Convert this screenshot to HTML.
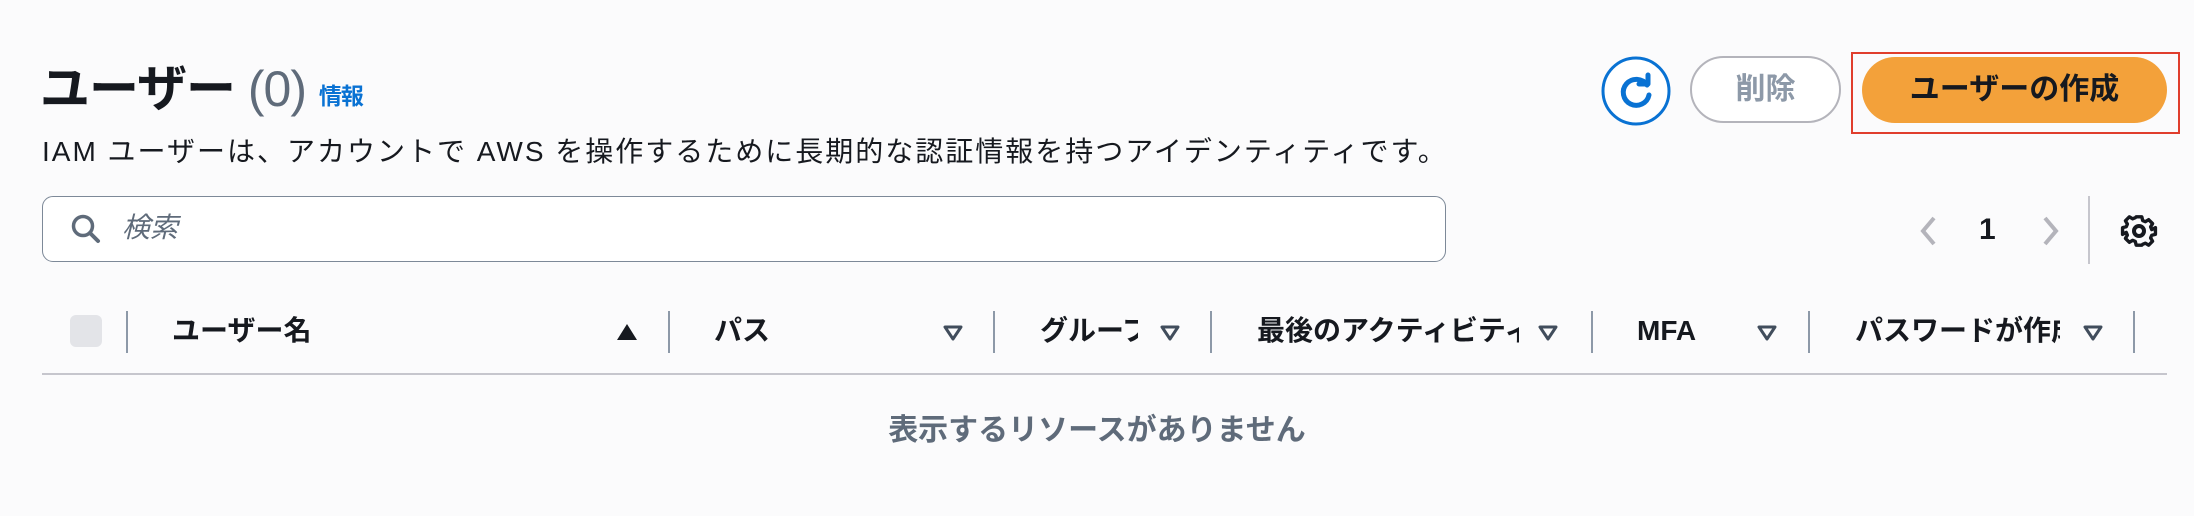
<!DOCTYPE html>
<html><head><meta charset="utf-8"><style>
body{margin:0;width:2194px;height:516px;background:#fbfbfc;font-family:"Liberation Sans","Noto Sans CJK JP",sans-serif;position:relative;overflow:hidden;color:#16191f}
.a{position:absolute;white-space:nowrap}
.h{font-weight:bold;font-size:28px;color:#16191f;top:313px;line-height:36px}
.dv{position:absolute;top:311px;height:42px;width:2px;background:#8d99a8}
.dn{position:absolute;top:324px}
</style></head><body>
<div class="a" style="left:40px;top:57px;font-size:50px;line-height:64px;font-weight:bold;letter-spacing:-1px">ユーザー <span style="color:#5f6b7a;font-weight:normal">(0)</span> <span style="font-size:23px;color:#0972d3;font-weight:bold;vertical-align:2px">情報</span></div>
<div class="a" style="left:42px;top:134px;font-size:28px;line-height:36px;letter-spacing:2px">IAM ユーザーは、アカウントで AWS を操作するために長期的な認証情報を持つアイデンティティです。</div>
<div class="a" style="left:42px;top:196px;width:1402px;height:64px;border:1.5px solid #7d8998;border-radius:11px;background:#fff"></div>
<svg class="a" style="left:70px;top:213px" width="32" height="32" viewBox="0 0 32 32"><circle cx="13" cy="13" r="9.5" fill="none" stroke="#5f6b7a" stroke-width="3.5"/><path d="M20 20 L28 28" stroke="#5f6b7a" stroke-width="4" stroke-linecap="round"/></svg>
<div class="a" style="left:122px;top:210px;font-size:28px;line-height:36px;font-style:italic;color:#5f6b7a">検索</div>
<svg class="a" style="left:1600px;top:55px" width="72" height="72" viewBox="0 0 72 72"><circle cx="36" cy="36" r="33" fill="#fff" stroke="#0972d3" stroke-width="3"/><path d="M47 30 A13 13 0 1 0 49 40" fill="none" stroke="#0972d3" stroke-width="5" stroke-linecap="round"/><path d="M39 29 L48 29 L48 20" fill="none" stroke="#0972d3" stroke-width="5" stroke-linecap="round" stroke-linejoin="round"/></svg>
<div class="a" style="left:1690px;top:56px;width:147px;height:63px;border:2.5px solid #b4b4bb;border-radius:34px;background:#fff;text-align:center;line-height:63px;font-size:30px;font-weight:bold;color:#8d99a8">削除</div>
<div class="a" style="left:1851px;top:52px;width:325px;height:78px;border:2.5px solid #e03e2d"></div>
<div class="a" style="left:1862px;top:57px;width:305px;height:66px;border-radius:34px;background:#f3a13a;text-align:center;line-height:66px;font-size:30px;font-weight:bold;color:#16191f">ユーザーの作成</div>
<svg class="a" style="left:1915px;top:214px" width="26" height="34" viewBox="0 0 26 34"><path d="M19 4 L8 17 L19 30" fill="none" stroke="#b4b4bb" stroke-width="4"/></svg>
<div class="a" style="left:1979px;top:212px;font-size:30px;font-weight:bold;line-height:36px">1</div>
<svg class="a" style="left:2038px;top:214px" width="26" height="34" viewBox="0 0 26 34"><path d="M7 4 L18 17 L7 30" fill="none" stroke="#b4b4bb" stroke-width="4"/></svg>
<div class="a" style="left:2088px;top:196px;width:2px;height:68px;background:#c6c6cd"></div>
<svg class="a" style="left:2119px;top:211px" width="40" height="40" viewBox="0 0 24 24"><path d="M10 2h4l.6 2.6 1.9.8 2.3-1.4 2.8 2.8-1.4 2.3.8 1.9L23.6 9.6v4.8l-2.6.6-.8 1.9 1.4 2.3-2.8 2.8-2.3-1.4-1.9.8L14 22h-4l-.6-2.6-1.9-.8-2.3 1.4-2.8-2.8 1.4-2.3-.8-1.9L.4 14.4v-4.8l2.6-.6.8-1.9-1.4-2.3 2.8-2.8 2.3 1.4 1.9-.8z" transform="translate(12 12) scale(.85) translate(-12 -12)" fill="none" stroke="#16191f" stroke-width="2.4" stroke-linejoin="round"/><circle cx="12" cy="12" r="3" fill="none" stroke="#16191f" stroke-width="2.4"/></svg>
<div class="a" style="left:70px;top:315px;width:32px;height:32px;border-radius:6px;background:#e3e4e8"></div>
<div class="dv" style="left:126px"></div><div class="dv" style="left:668px"></div><div class="dv" style="left:993px"></div><div class="dv" style="left:1210px"></div><div class="dv" style="left:1591px"></div><div class="dv" style="left:1808px"></div><div class="dv" style="left:2133px"></div>
<div class="a h" style="left:172px">ユーザー名</div>
<svg class="a" style="left:615px;top:322px" width="24" height="20"><path d="M12 2 L22 18 L2 18Z" fill="#16191f"/></svg>
<div class="a h" style="left:714px">パス</div>
<div class="a h" style="left:1040px;width:98px;overflow:hidden">グループ</div>
<div class="a h" style="left:1257px;width:262px;overflow:hidden">最後のアクティビティ</div>
<div class="a h" style="left:1637px">MFA</div>
<div class="a h" style="left:1855px;width:205px;overflow:hidden">パスワードが作成</div>
<svg class="dn" style="left:942px" width="22" height="18"><path d="M3 3 L19 3 L11 15Z" fill="none" stroke="#414d5c" stroke-width="3" stroke-linejoin="round"/></svg>
<svg class="dn" style="left:1159px" width="22" height="18"><path d="M3 3 L19 3 L11 15Z" fill="none" stroke="#414d5c" stroke-width="3" stroke-linejoin="round"/></svg>
<svg class="dn" style="left:1537px" width="22" height="18"><path d="M3 3 L19 3 L11 15Z" fill="none" stroke="#414d5c" stroke-width="3" stroke-linejoin="round"/></svg>
<svg class="dn" style="left:1756px" width="22" height="18"><path d="M3 3 L19 3 L11 15Z" fill="none" stroke="#414d5c" stroke-width="3" stroke-linejoin="round"/></svg>
<svg class="dn" style="left:2082px" width="22" height="18"><path d="M3 3 L19 3 L11 15Z" fill="none" stroke="#414d5c" stroke-width="3" stroke-linejoin="round"/></svg>
<div class="a" style="left:42px;top:373px;width:2125px;height:2px;background:#c6c6cd"></div>
<div class="a" style="left:0;width:2194px;text-align:center;top:412px;font-size:30px;font-weight:bold;color:#5f6b7a;line-height:38px">表示するリソースがありません</div>
</body></html>
